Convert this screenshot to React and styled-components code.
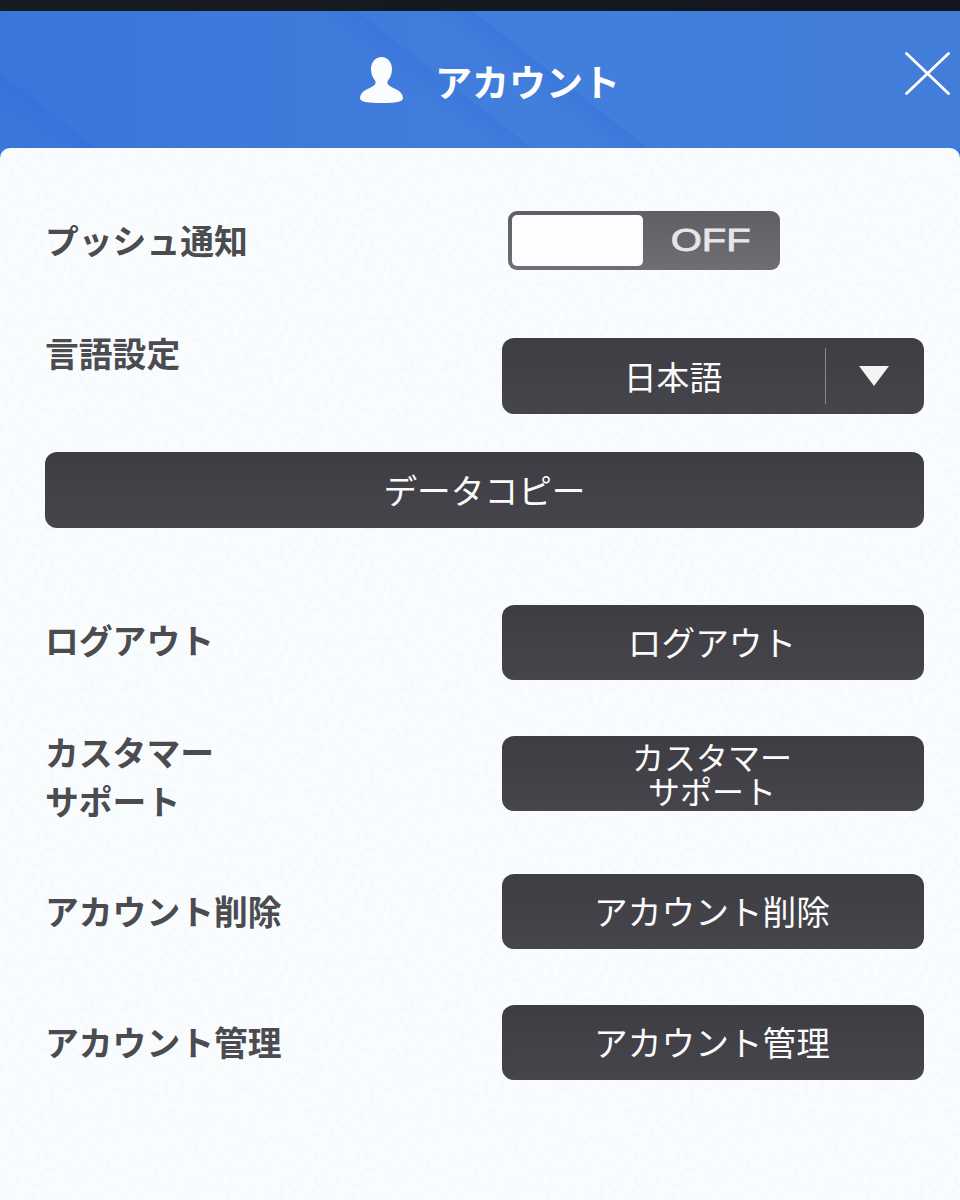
import React from 'react';
import styled, { createGlobalStyle } from 'styled-components';

const GlobalStyle = createGlobalStyle`
    html, body {
        margin: 0;
        padding: 0;
        background: #fafdfe;
    }
    body {
        font-family: "Noto Sans CJK JP", "Noto Sans", sans-serif;
    }
`

const paperNoise = "url(\"data:image/svg+xml,%3Csvg xmlns='http://www.w3.org/2000/svg' width='320' height='320'%3E%3Cfilter id='n'%3E%3CfeTurbulence type='fractalNoise' baseFrequency='0.2' numOctaves='3' stitchTiles='stitch'/%3E%3CfeColorMatrix values='0 0 0 0 0.76 0 0 0 0 0.86 0 0 0 0 0.93 0.5 0 0 0 -0.19'/%3E%3C/filter%3E%3Crect width='320' height='320' filter='url(%23n)'/%3E%3C/svg%3E\")"

function UserIcon() {
    return (
        <svg width="43" height="46" viewBox="0 0 43 46">
            <path
                fill="#fafcfe"
                d="M21.500 0c6 0 10.500 5 10.500 12 0 5-1.800 9-4 11.500-.8 1-.8 3 0 4 2.500 2.500 6 3.500 9.500 5.500 3.500 2 5.500 5 5.500 8 0 3-4 5-21.500 5S0 44 0 41c0-3 2-6 5.500-8 3.500-2 7-3 9.500-5.500.8-1 .8-3 0-4C12.800 21 11 17 11 12 11 5 15.500 0 21.500 0z"
            />
        </svg>
    )
}

function CloseIcon() {
    return (
        <svg width="45" height="43" viewBox="0 0 45 43">
            <path
                d="M1.500 1.500l42 40M43.500 1.500l-42 40"
                stroke="#ffffff"
                strokeWidth="2.800"
                strokeLinecap="round"
                fill="none"
            />
        </svg>
    )
}

function App() {
    return (
        <Page>
            <GlobalStyle />
            <TopStrip />
            <Header>
                <UserIcon />
                <HeaderTitle>アカウント</HeaderTitle>
                <CloseButton>
                    <CloseIcon />
                </CloseButton>
            </Header>
            <Panel>
                <Row $height={59}>
                    <Label $shift={-1}>プッシュ通知</Label>
                    <Toggle>
                        <Knob />
                        <ToggleText>OFF</ToggleText>
                    </Toggle>
                </Row>
                <Row $top={68} $height={76}>
                    <Label $shift={-24}>言語設定</Label>
                    <Select>
                        <SelectValue>日本語</SelectValue>
                        <SelectArrow />
                    </Select>
                </Row>
                <WideButton>データコピー</WideButton>
                <Row $top={77}>
                    <Label $shift={-3}>ログアウト</Label>
                    <ActionButton>ログアウト</ActionButton>
                </Row>
                <Row $top={56}>
                    <Label $shift={2}>カスタマー<br />サポート</Label>
                    <ActionButton $tight>カスタマー<br />サポート</ActionButton>
                </Row>
                <Row $top={63}>
                    <Label $shift={-1}>アカウント削除</Label>
                    <ActionButton>アカウント削除</ActionButton>
                </Row>
                <Row $top={56}>
                    <Label $shift={-1}>アカウント管理</Label>
                    <ActionButton>アカウント管理</ActionButton>
                </Row>
            </Panel>
        </Page>
    )
}

export default App

const Page = styled.div`
    width: 960px;
    height: 1200px;
    display: flex;
    flex-direction: column;
    overflow: hidden;
    background: #3d79da;
`

const TopStrip = styled.div`
    height: 11px;
    background: linear-gradient(90deg, #161b24, #12161f);
`

const Header = styled.header`
    position: relative;
    height: 137px;
    box-sizing: border-box;
    padding-left: 20px;
    display: flex;
    align-items: center;
    justify-content: center;
    gap: 32px;
    background:
        linear-gradient(38deg, transparent 43%, rgba(35, 90, 225, 0.16) 46.800%, transparent 46.900%),
        linear-gradient(38deg, transparent 53%, rgba(35, 90, 225, 0.18) 57%, transparent 57.100%),
        linear-gradient(38deg, transparent 5%, rgba(35, 90, 225, 0.14) 8.400%, transparent 8.500%),
        linear-gradient(90deg, #3a75da, #427edb 55%, #417dd9);
`

const HeaderTitle = styled.h1`
    margin: 2px 0 0;
    color: #fdfeff;
    font-size: 37px;
    font-weight: 700;
    line-height: 44px;
`

const CloseButton = styled.div`
    position: absolute;
    top: 41px;
    right: 10px;
    line-height: 0;
`

const Panel = styled.main`
    flex: 1;
    box-sizing: border-box;
    padding: 63px 36px 0 45px;
    border-radius: 10px 10px 0 0;
    background-color: #fafdfe;
    background-image: ${paperNoise};
`

const Row = styled.div`
    display: grid;
    grid-template-columns: 457px 422px;
    grid-template-rows: minmax(0, 1fr);
    align-items: center;
    margin-top: ${props => props.$top || 0}px;
    height: ${props => props.$height || 75}px;
`

const Label = styled.div`
    position: relative;
    top: ${props => props.$shift || 0}px;
    color: #4b4b50;
    font-size: 33.8px;
    font-weight: 700;
    line-height: 49px;
    white-space: nowrap;
`

const Toggle = styled.div`
    width: 272px;
    height: 59px;
    margin-left: 6px;
    box-sizing: border-box;
    padding: 4px;
    display: flex;
    border-radius: 9px;
    background: linear-gradient(180deg, #605f65, #6f6e73);
`

const Knob = styled.div`
    width: 131px;
    border-radius: 5px;
    background: #fbfdfe;
`

const ToggleText = styled.span`
    flex: 1;
    display: flex;
    align-items: center;
    justify-content: center;
    padding-left: 2px;
    color: #e6e6e7;
    font-family: "Liberation Sans", sans-serif;
    font-size: 32px;
    font-weight: 400;
    -webkit-text-stroke: 0.8px #e6e6e7;
    transform: scaleX(1.25);
`

const darkControl = `
    box-sizing: border-box;
    height: 76px;
    border-radius: 12px;
    color: #fbfbfc;
    background: linear-gradient(180deg, #3d3d43, #45454b);
    font-size: 33.7px;
    font-weight: 400;
`

const Select = styled.div`
    ${darkControl}
    display: flex;
    align-items: center;
`

const SelectValue = styled.div`
    width: 324px;
    height: 56px;
    display: flex;
    align-items: center;
    justify-content: center;
    padding-left: 19px;
    padding-bottom: 2px;
    box-sizing: border-box;
    border-right: 1px solid #8a8a8e;
    font-size: 32.8px;
`

const SelectArrow = styled.div`
    width: 0;
    height: 0;
    margin-left: 33px;
    border-left: 15px solid transparent;
    border-right: 15px solid transparent;
    border-top: 20px solid #f4f4f5;
`

const WideButton = styled.div`
    ${darkControl}
    margin-top: 38px;
    display: flex;
    align-items: center;
    justify-content: center;
    padding-bottom: 2px;
`

const ActionButton = styled.div`
    ${darkControl}
    height: 75px;
    display: flex;
    align-items: center;
    justify-content: center;
    padding: 0 2px 2px 0;
    text-align: center;
    font-size: ${props => (props.$tight ? '32px' : '33.7px')};
    line-height: ${props => (props.$tight ? '34px' : '44px')};
`
